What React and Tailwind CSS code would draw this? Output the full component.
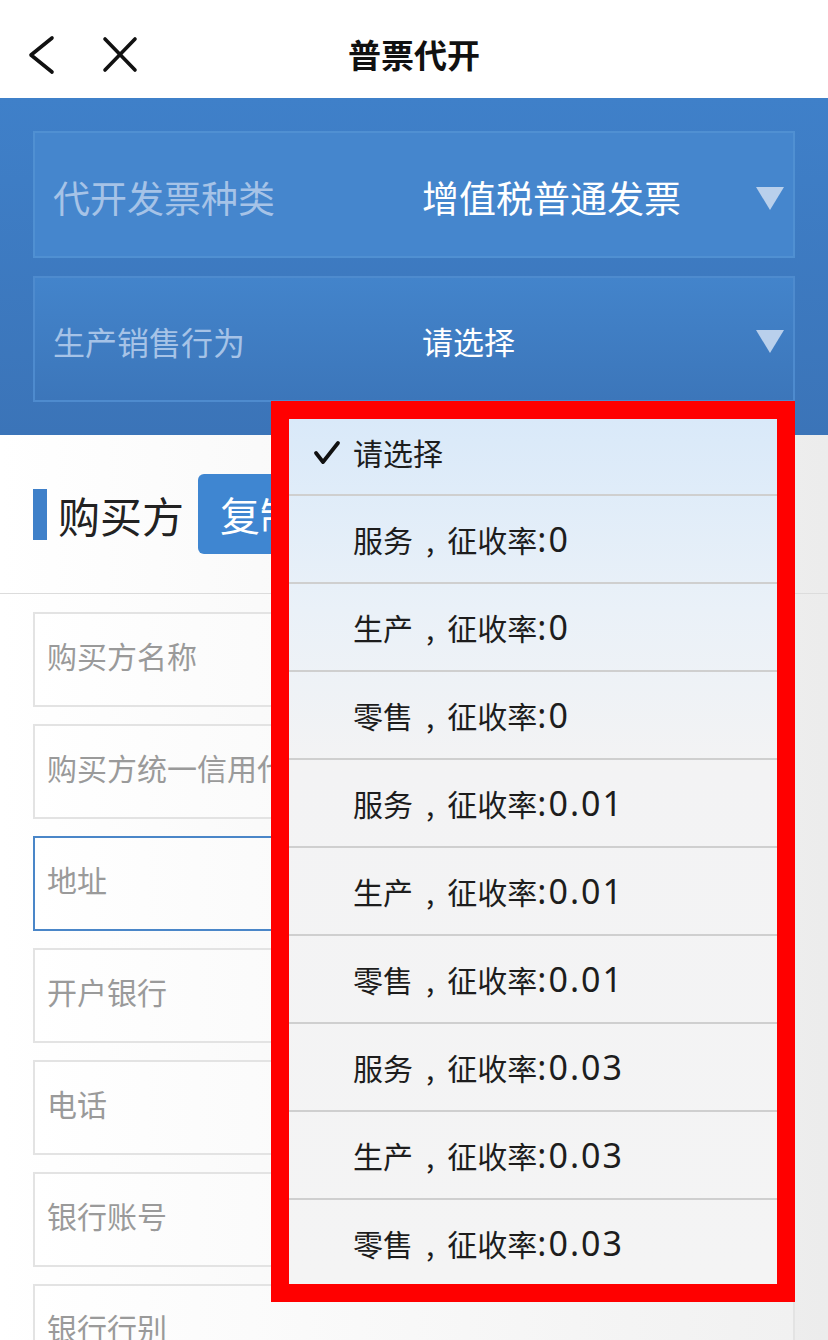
import React from "react";

const options = [
  null,
  ["服务", "0"],
  ["生产", "0"],
  ["零售", "0"],
  ["服务", "0.01"],
  ["生产", "0.01"],
  ["零售", "0.01"],
  ["服务", "0.03"],
  ["生产", "0.03"],
  ["零售", "0.03"],
];

const inputs = ["购买方名称", "购买方统一信用代码", "地址", "开户银行", "电话", "银行账号", "银行行别"];

function Tri() {
  return (
    <svg width="30" height="26" viewBox="0 0 30 26" className="shrink-0">
      <polygon points="1,2 29,2 15,25" fill="#b9d0ec" />
    </svg>
  );
}

export default function App() {
  const font = { fontFamily: '"Noto Sans CJK SC", "Noto Sans", sans-serif' };
  return (
    <div className="relative w-[828px] h-[1340px] overflow-hidden bg-white" style={font}>
      {/* header */}
      <div className="h-[98px] pt-[12px] flex items-center relative bg-white">
        <svg width="40" height="44" viewBox="0 0 40 44" className="ml-[22px]">
          <polyline points="30,5 9,22 30,39" fill="none" stroke="#111" strokeWidth="3.6" strokeLinecap="round" strokeLinejoin="round" />
        </svg>
        <svg width="40" height="40" viewBox="0 0 40 40" className="ml-[38px]">
          <line x1="5" y1="4" x2="35" y2="35" stroke="#111" strokeWidth="3.6" strokeLinecap="round" />
          <line x1="35" y1="4" x2="5" y2="35" stroke="#111" strokeWidth="3.6" strokeLinecap="round" />
        </svg>
        <div className="absolute left-0 right-0 top-0 h-full pt-[12px] flex items-center justify-center pointer-events-none">
          <span className="text-[33px] font-bold text-[#111]">普票代开</span>
        </div>
      </div>

      {/* blue area */}
      <div className="bg-gradient-to-b from-[#3f80c9] to-[#3b74b8] px-[33px] pt-[33px] pb-[33px] flex flex-col gap-[18px]">
        <div className="h-[127px] pt-[6px] border-2 border-[#5090d2] bg-[#4586cd] flex items-center pl-[18px] pr-[8px]">
          <span className="w-[369px] text-[37px] text-[#a6c3e7]">代开发票种类</span>
          <span className="flex-1 text-[37px] text-white">增值税普通发票</span>
          <Tri />
        </div>
        <div className="h-[126px] pt-[4px] border-2 border-[#4e8bce] bg-gradient-to-b from-[#4384cb] to-[#3c76ba] flex items-center pl-[18px] pr-[8px]">
          <span className="w-[369px] text-[32px] text-[#a6c3e7]">生产销售行为</span>
          <span className="flex-1 text-[31px] text-white">请选择</span>
          <Tri />
        </div>
      </div>

      {/* content */}
      <div className="bg-gradient-to-r from-white via-[#f7f7f7] to-[#ececec]">
        <div className="h-[159px] flex items-center px-[33px] border-b border-[#dcdcdc]">
          <div className="w-[14px] h-[51px] bg-[#3f80c9]" />
          <span className="ml-[11px] text-[42px] text-[#222]">购买方</span>
          <div className="ml-[14px] h-[80px] px-[22px] rounded-[6px] bg-[#3f86d1] flex items-center text-[40px] text-white">复制</div>
        </div>
        <div className="px-[33px] pt-[18px] flex flex-col gap-[17px]">
          {inputs.map((t) => (
            <div
              key={t}
              className={
                "h-[95px] flex items-center pl-[12px] pb-[8px] text-[30px] text-[#9a9a9a] bg-gradient-to-r from-white to-[#f1f1f1] " +
                (t === "地址" ? "border-2 border-[#4a86c8]" : "border-2 border-[#e3e3e3]")
              }
            >
              {t}
            </div>
          ))}
        </div>
      </div>

      {/* dropdown overlay */}
      <div className="absolute left-[271px] top-[401px] w-[524px] h-[901px] border-[18px] border-[#ff0000] overflow-hidden">
        <div className="h-full bg-[linear-gradient(to_bottom,#d9e9f9_0%,#eaf1f8_22%,#f3f3f4_40%,#f4f4f4_100%)] flex flex-col">
          {options.map((o, i) => (
            <div
              key={i}
              className={
                "shrink-0 flex items-center text-[30px] text-[#1d1d1d] " +
                (i === 0 ? "h-[75px] pb-[8px]" : "h-[88px] border-t-2 border-[#cfcfcf]")
              }
            >
              <div className="w-[64px] flex justify-end pr-[12px]">
                {i === 0 && (
                  <svg width="28" height="26" viewBox="0 0 28 26">
                    <polyline points="3,13 10,22 25,3" fill="none" stroke="#111" strokeWidth="3.8" strokeLinecap="round" strokeLinejoin="round" />
                  </svg>
                )}
              </div>
              {o === null ? (
                <span>请选择</span>
              ) : (
                <span className="flex items-baseline">
                  <span>{o[0]}</span>
                  <span className="px-[13px]">,</span>
                  <span>征收率</span>
                  <span className="font-['Noto_Sans'] text-[34px] leading-none tracking-[2px]">:{o[1]}</span>
                </span>
              )}
            </div>
          ))}
        </div>
      </div>
    </div>
  );
}
